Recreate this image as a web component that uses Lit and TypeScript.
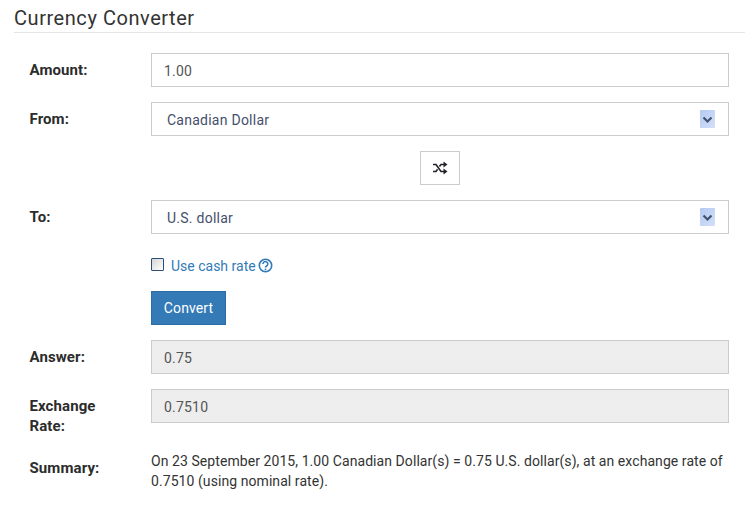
import { LitElement, html, css } from "lit";
import { customElement } from "lit/decorators.js";

@customElement("app-root")
export class AppRoot extends LitElement {
  static styles = css`
    :host { display: block; width: 745px; height: 505px; background: #fff; overflow: hidden;
      font-family: Roboto, "Liberation Sans", sans-serif; font-size: 14px; color: #333; }
    * { box-sizing: border-box; }
    .title { margin: 0 0 0 14px; height: 33px; padding-top: 5px; font-size: 20px; font-weight: 400; line-height: 26px;
      border-bottom: 1px solid #e5e5e5; color: #333; letter-spacing: 0.55px; }
    .form { display: flex; flex-direction: column; gap: 15px; padding: 20px 16px 0 30px; }
    .row { display: grid; grid-template-columns: 121px 1fr; align-items: start; }
    .label { font-weight: 700; font-size: 15px; letter-spacing: 0.1px; line-height: 20px; padding-top: 7px; color: #2c2c2c; width: 80px; margin-left: -0.5px; }
    .field { height: 34px; border: 1px solid #ccc; background: #fff; display: flex; align-items: center;
      padding: 3px 12px 1px; color: #555; line-height: 20px; letter-spacing: 0.2px; }
    .select { padding-left: 15px; padding-right: 13px; justify-content: space-between; color: #44506b; letter-spacing: 0.25px; }
    .arrow { width: 15px; height: 18px; display: block; margin-top: -2px; }
    .readonly { background-color: #f0f0f0;
      background-image: conic-gradient(#ebebeb 25%, transparent 0 50%, #ebebeb 0 75%, transparent 0);
      background-size: 2px 2px; }
    .swap { width: 40px; height: 34px; margin-left: 269px; border: 1px solid #ccc; background: #fff; display: flex;
      align-items: center; justify-content: center; padding: 0; }
    .check-row { display: flex; align-items: center; height: 21px; margin-top: 6px; color: #337ab7; line-height: 20px; }
    .box { width: 13px; height: 13px; border: 1px solid #2b4f78; margin-right: 7px; margin-top: -3px; border-radius: 1px;
      background: linear-gradient(135deg, #d4d4d4, #fff); flex: none; }
    .help { margin-left: 2px; display: block; }
    .btn { width: 75px; height: 34px; background: #337ab7; border: 1px solid #2e6da4; color: #fff; font: inherit;
      padding: 0; display: block; letter-spacing: 0.1px; }
    .summary { line-height: 20px; color: #333; letter-spacing: 0.07px; }
    .sumlabel { padding-top: 0; margin-top: 7px; }
  `;

  render() {
    return html`
      <h1 class="title">Currency Converter</h1>
      <div class="form">
        <div class="row"><div class="label">Amount:</div><div class="field">1.00</div></div>
        <div class="row"><div class="label">From:</div>
          <div class="field select">Canadian Dollar ${this.arrow()}</div></div>
        <div class="row"><div></div>
          <button class="swap" aria-label="Swap">
            <svg width="16" height="14" viewBox="0 0 16 14" fill="none" stroke="#23232b">
              <path d="M1 3.5h3l5 7h3" stroke-width="1.6"/>
              <path d="M1 10.5h3l1.6-2.2M7.4 5.5 9 3.5h3" stroke-width="1.6"/>
              <path d="M11.5 0.5 15.5 3.5 11.5 6.5zM11.5 7.5l4 3-4 3z" fill="#23232b" stroke="none"/>
            </svg>
          </button></div>
        <div class="row"><div class="label">To:</div>
          <div class="field select">U.S. dollar ${this.arrow()}</div></div>
        <div class="row"><div></div>
          <div class="check-row"><span class="box"></span>Use cash rate
            <svg class="help" width="15" height="15" viewBox="0 0 15 15" fill="none" stroke="#337ab7">
              <circle cx="7.5" cy="7.5" r="6.2" stroke-width="1.6"/>
              <path d="M5 6a2.4 2.4 0 1 1 3.7 2c-.8.5-1.2.9-1.2 1.6" stroke-width="1.6"/>
              <path d="M7.5 10.6v1.6" stroke-width="1.6"/>
            </svg></div></div>
        <div class="row"><div></div><button class="btn">Convert</button></div>
        <div class="row"><div class="label">Answer:</div><div class="field readonly">0.75</div></div>
        <div class="row"><div class="label">Exchange Rate:</div><div class="field readonly">0.7510</div></div>
        <div class="row"><div class="label sumlabel">Summary:</div>
          <div class="summary">On 23 September 2015, 1.00 Canadian Dollar(s) = 0.75 U.S. dollar(s), at an exchange rate of 0.7510 (using nominal rate).</div></div>
      </div>
    `;
  }

  arrow() {
    return html`<svg class="arrow" viewBox="0 0 15 18">
      <defs><linearGradient id="g" x1="0" y1="0" x2="1" y2="1"><stop offset="0" stop-color="#b4c9f2"/><stop offset="1" stop-color="#d3e0f8"/></linearGradient></defs>
      <rect width="15" height="18" rx="1" fill="url(#g)"/>
      <path d="M3.5 7.5 7.5 11.5 11.5 7.5" fill="none" stroke="#3f5270" stroke-width="2.2"/>
    </svg>`;
  }
}
